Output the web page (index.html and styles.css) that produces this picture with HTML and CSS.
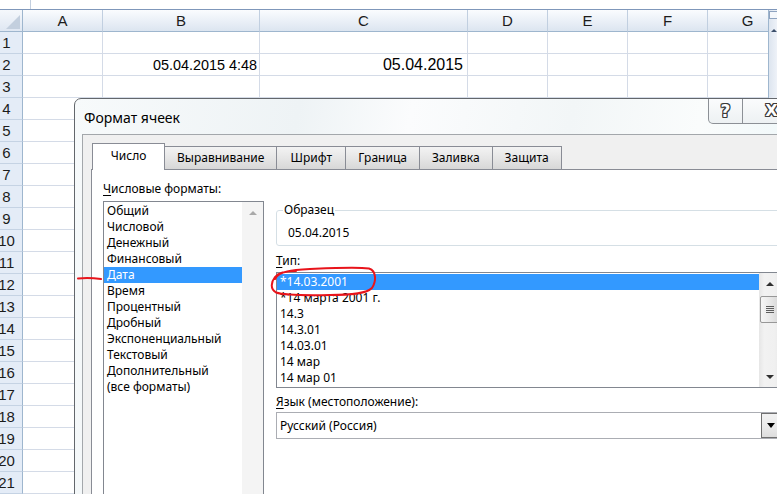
FILE: index.html
```html
<!DOCTYPE html>
<html lang="ru">
<head>
<meta charset="utf-8">
<title>Формат ячеек</title>
<link rel="stylesheet" href="styles.css">
</head>
<body>
<div class="sheet">
  <div class="topbar"><div class="namebox"></div><div class="formula"></div></div>
  <div class="sheetbody">
    <div class="grid">
      <div class="corner"></div><div class="ch">A</div><div class="ch">B</div><div class="ch">C</div><div class="ch">D</div><div class="ch">E</div><div class="ch">F</div><div class="ch">G</div>
      <div class="rh">1</div><div class="cell"></div><div class="cell"></div><div class="cell"></div><div class="cell"></div><div class="cell"></div><div class="cell"></div><div class="cell"></div>
      <div class="rh">2</div><div class="cell"></div><div class="cell">05.04.2015 4:48</div><div class="cell big">05.04.2015</div><div class="cell"></div><div class="cell"></div><div class="cell"></div><div class="cell"></div>
      <div class="rh">3</div><div class="cell"></div><div class="cell"></div><div class="cell"></div><div class="cell"></div><div class="cell"></div><div class="cell"></div><div class="cell"></div>
      <div class="rh">4</div><div class="cell"></div><div class="cell"></div><div class="cell"></div><div class="cell"></div><div class="cell"></div><div class="cell"></div><div class="cell"></div>
      <div class="rh">5</div><div class="cell"></div><div class="cell"></div><div class="cell"></div><div class="cell"></div><div class="cell"></div><div class="cell"></div><div class="cell"></div>
      <div class="rh">6</div><div class="cell"></div><div class="cell"></div><div class="cell"></div><div class="cell"></div><div class="cell"></div><div class="cell"></div><div class="cell"></div>
      <div class="rh">7</div><div class="cell"></div><div class="cell"></div><div class="cell"></div><div class="cell"></div><div class="cell"></div><div class="cell"></div><div class="cell"></div>
      <div class="rh">8</div><div class="cell"></div><div class="cell"></div><div class="cell"></div><div class="cell"></div><div class="cell"></div><div class="cell"></div><div class="cell"></div>
      <div class="rh">9</div><div class="cell"></div><div class="cell"></div><div class="cell"></div><div class="cell"></div><div class="cell"></div><div class="cell"></div><div class="cell"></div>
      <div class="rh">10</div><div class="cell"></div><div class="cell"></div><div class="cell"></div><div class="cell"></div><div class="cell"></div><div class="cell"></div><div class="cell"></div>
      <div class="rh">11</div><div class="cell"></div><div class="cell"></div><div class="cell"></div><div class="cell"></div><div class="cell"></div><div class="cell"></div><div class="cell"></div>
      <div class="rh">12</div><div class="cell"></div><div class="cell"></div><div class="cell"></div><div class="cell"></div><div class="cell"></div><div class="cell"></div><div class="cell"></div>
      <div class="rh">13</div><div class="cell"></div><div class="cell"></div><div class="cell"></div><div class="cell"></div><div class="cell"></div><div class="cell"></div><div class="cell"></div>
      <div class="rh">14</div><div class="cell"></div><div class="cell"></div><div class="cell"></div><div class="cell"></div><div class="cell"></div><div class="cell"></div><div class="cell"></div>
      <div class="rh">15</div><div class="cell"></div><div class="cell"></div><div class="cell"></div><div class="cell"></div><div class="cell"></div><div class="cell"></div><div class="cell"></div>
      <div class="rh">16</div><div class="cell"></div><div class="cell"></div><div class="cell"></div><div class="cell"></div><div class="cell"></div><div class="cell"></div><div class="cell"></div>
      <div class="rh">17</div><div class="cell"></div><div class="cell"></div><div class="cell"></div><div class="cell"></div><div class="cell"></div><div class="cell"></div><div class="cell"></div>
      <div class="rh">18</div><div class="cell"></div><div class="cell"></div><div class="cell"></div><div class="cell"></div><div class="cell"></div><div class="cell"></div><div class="cell"></div>
      <div class="rh">19</div><div class="cell"></div><div class="cell"></div><div class="cell"></div><div class="cell"></div><div class="cell"></div><div class="cell"></div><div class="cell"></div>
      <div class="rh">20</div><div class="cell"></div><div class="cell"></div><div class="cell"></div><div class="cell"></div><div class="cell"></div><div class="cell"></div><div class="cell"></div>
      <div class="rh">21</div><div class="cell"></div><div class="cell"></div><div class="cell"></div><div class="cell"></div><div class="cell"></div><div class="cell"></div><div class="cell"></div>
    </div>
    <div class="vscroll">
      <div class="splitbox"></div>
      <div class="vs-up"></div>
    </div>
  </div>
</div>

<div class="dialog">
  <div class="titlebar">
    <span class="title">Формат ячеек</span>
    <div class="capbtns">
      <div class="cap help">?</div>
      <div class="cap close">X</div>
    </div>
  </div>
  <div class="client">
    <div class="tabs">
      <div class="tab active">Число</div>
      <div class="tab">Выравнивание</div>
      <div class="tab">Шрифт</div>
      <div class="tab">Граница</div>
      <div class="tab">Заливка</div>
      <div class="tab">Защита</div>
    </div>
    <div class="panel">
      <div class="leftcol">
        <div class="label"><u>Ч</u>исловые форматы:</div>
        <div class="listbox cats">
          <div class="items">
            <div class="item">Общий</div>
            <div class="item">Числовой</div>
            <div class="item">Денежный</div>
            <div class="item">Финансовый</div>
            <div class="item selected">Дата</div>
            <div class="item">Время</div>
            <div class="item">Процентный</div>
            <div class="item">Дробный</div>
            <div class="item">Экспоненциальный</div>
            <div class="item">Текстовый</div>
            <div class="item">Дополнительный</div>
            <div class="item">(все форматы)</div>
          </div>
          <div class="sbar disabled">
            <div class="sbtn"><span class="arr-up"></span></div>
          </div>
        </div>
      </div>
      <div class="rightcol">
        <fieldset class="sample">
          <legend>Образец</legend>
          <div class="sample-value">05.04.2015</div>
        </fieldset>
        <div class="label type-label"><u>Т</u>ип:</div>
        <div class="listbox types">
          <div class="items">
            <div class="item selected">*14.03.2001</div>
            <div class="item">*14 марта 2001 г.</div>
            <div class="item">14.3</div>
            <div class="item">14.3.01</div>
            <div class="item">14.03.01</div>
            <div class="item">14 мар</div>
            <div class="item">14 мар 01</div>
          </div>
          <div class="sbar">
            <div class="sbtn"><span class="arr-up"></span></div>
            <div class="thumb"><span class="grip"></span></div>
            <div class="track"></div>
            <div class="sbtn"><span class="arr-down"></span></div>
          </div>
        </div>
        <div class="label lang-label"><u>Я</u>зык (местоположение):</div>
        <div class="combo">
          <span class="combo-text">Русский (Россия)</span>
          <div class="combo-btn"><span class="arr-down dark"></span></div>
        </div>
      </div>
    </div>
  </div>
</div>

<svg class="marks" width="777" height="494" viewBox="0 0 777 494">
  <path d="M78 278.5 C86 277.5 94 278 101 279" fill="none" stroke="#e8141b" stroke-width="2" stroke-linecap="round"/>
  <path d="M275 279 C279 271 292 270 310 269 C335 268 356 267 369 268.5 C377 271 376 282 372 288 C366 294 350 295 330 295 C305 295.5 285 295.5 276 292.5 C270 289 271 282 275 277 C279 272 288 271 296 271" fill="none" stroke="#e8141b" stroke-width="2" stroke-linecap="round" stroke-linejoin="round"/>
</svg>
</body>
</html>
```

FILE: styles.css
```css
* { box-sizing: border-box; }
html, body { margin: 0; padding: 0; }
body {
  width: 777px;
  height: 494px;
  overflow: hidden;
  position: relative;
  background: #fff;
  font-family: "Liberation Sans", Arial, sans-serif;
  color: #000;
}

/* ---------- spreadsheet ---------- */
.topbar {
  height: 10px;
  display: flex;
  border-bottom: 1px solid #7f97ba;
  background: #fff;
}
.namebox { width: 31px; border-right: 1px solid #c3cfdf; }
.formula { flex: 1; }

.sheetbody { display: flex; }
.grid {
  width: 768px;
  overflow: hidden;
  display: grid;
  grid-template-columns: 23px 80px 157px 208px 80px 80px 80px 80px;
  grid-auto-rows: 22px;
}
.corner {
  position: relative;
  background: linear-gradient(#f5f8fc, #dfe7f2);
  border-right: 1px solid #9eb6ce;
  border-bottom: 1px solid #9eb6ce;
}
.corner::after {
  content: "";
  position: absolute;
  right: 2px;
  bottom: 2px;
  width: 14px;
  height: 14px;
  background: #c3cfde;
  clip-path: polygon(100% 0, 100% 100%, 0 100%);
}
.ch {
  background: linear-gradient(#fafcfe, #e8eef6 60%, #dce5f0);
  border-right: 1px solid #c1cfe0;
  border-bottom: 1px solid #9eb6ce;
  display: flex;
  align-items: center;
  justify-content: center;
  font-size: 15px;
  color: #1c1c1c;
}
.rh {
  background: #e4ecf7;
  border-right: 1px solid #9eb6ce;
  border-bottom: 1px solid #c5d3e4;
  display: flex;
  align-items: center;
  justify-content: center;
  padding-right: 9px;
  font-size: 15px;
  color: #1c1c1c;
  white-space: nowrap;
}
.cell {
  border-right: 1px solid #d4dbe7;
  border-bottom: 1px solid #d4dbe7;
  display: flex;
  align-items: center;
  justify-content: flex-end;
  padding-right: 2px;
  font-size: 14.4px;
  white-space: nowrap;
  overflow: hidden;
}
.cell.big { font-size: 16px; padding-right: 4px; }

.vscroll {
  width: 9px;
  border-left: 1px solid #9eb6ce;
  background: linear-gradient(90deg, #dde5ef, #eef2f8);
}
.splitbox {
  height: 8px;
  margin-top: 1px;
  border: 1px solid #8ea3c0;
  border-right: none;
  background: #f4f7fb;
}
.vs-up {
  width: 0;
  height: 0;
  margin: 10px 0 0 2px;
  border-left: 3px solid transparent;
  border-right: 3px solid transparent;
  border-bottom: 3px solid #3c4f6b;
}

/* ---------- dialog ---------- */
.dialog {
  position: absolute;
  left: 74px;
  top: 98px;
  width: 734px;
  height: 420px;
  border: 1px solid #63676c;
  border-radius: 7px 7px 0 0;
  padding: 0 6px 0 7px;
  background: linear-gradient(100deg, #f7fafb 0%, #eef3f5 28%, #fbfcfd 42%, #f2f6f7 62%, #fafcfc 78%, #e8f5f8 100%);
  font-family: "Noto Sans", "Open Sans", sans-serif;
  font-size: 12px;
  color: #000;
  overflow: hidden;
}
.titlebar {
  height: 35px;
  display: flex;
  justify-content: space-between;
  align-items: flex-start;
}
.title {
  font-size: 14px;
  line-height: 20px;
  margin: 9px 0 0 2px;
}
.capbtns { display: flex; margin-top: -1px; }
.cap {
  height: 26px;
  border: 1px solid #8c9096;
  border-top: none;
  display: flex;
  align-items: center;
  justify-content: center;
  background: linear-gradient(#fbfcfd, #edf1f3);
  font-family: "DejaVu Sans", sans-serif;
  font-weight: bold;
  font-size: 17px;
  color: #fff;
  text-shadow: 1px 0 0 #3b3b3b, -1px 0 0 #3b3b3b, 0 1px 0 #3b3b3b, 0 -1px 0 #3b3b3b,
               1px 1px 0 #3b3b3b, -1px -1px 0 #3b3b3b, 1px -1px 0 #3b3b3b, -1px 1px 0 #3b3b3b;
}
.help { width: 35px; border-radius: 0 0 0 5px; }
.close { width: 58px; border-left: none; border-radius: 0 0 5px 0; font-size: 16px; }

.client {
  height: 400px;
  background: #f0f0f0;
  border-top: 1px solid #a3a7ab;
  border-left: 1px solid #a3a7ab;
  padding: 8px 0 0 8px;
}
.tabs {
  display: flex;
  align-items: flex-end;
  height: 26px;
  margin-left: 1px;
}
.tab {
  height: 23px;
  min-width: 70px;
  padding: 0 12px;
  margin-left: -1px;
  border: 1px solid #898c95;
  border-bottom: none;
  background: linear-gradient(#f3f3f3, #e6e6e6 50%, #d7d7d7);
  display: flex;
  align-items: center;
  justify-content: center;
  white-space: nowrap;
  line-height: 16px;
}
.tab.active {
  height: 27px;
  min-width: 73px;
  margin-left: 0;
  margin-bottom: -1px;
  background: #fff;
  position: relative;
  z-index: 1;
  padding-bottom: 2px;
}

.panel {
  height: 340px;
  background: #fff;
  border-top: 1px solid #898c95;
  border-left: 1px solid #898c95;
  display: flex;
  gap: 12px;
  padding: 11px 0 0 11px;
}
.label { line-height: 16px; white-space: nowrap; }
.label u { text-decoration-thickness: 1px; text-underline-offset: 2px; }

.leftcol { width: 161px; flex: none; }
.rightcol { width: 505px; flex: none; padding-top: 21px; }

.listbox {
  display: flex;
  border: 1px solid #828790;
  background: #fff;
}
.cats { margin-top: 4px; height: 320px; }
.items { flex: 1; padding-top: 1px; min-width: 0; }
.item {
  height: 16px;
  line-height: 16px;
  padding-left: 3px;
  white-space: nowrap;
  overflow: hidden;
}
.item.selected { background: #3399ff; color: #fff; }

.sbar {
  width: 21px;
  flex: none;
  display: flex;
  flex-direction: column;
  background: linear-gradient(90deg, #e6e6e6, #f2f2f2 25%, #f0f0f0 75%, #e9e9e9);
}
.sbar.disabled { background: #f4f4f4; }
.sbtn {
  height: 21px;
  flex: none;
  display: flex;
  align-items: center;
  justify-content: center;
}
.arr-up, .arr-down {
  width: 0;
  height: 0;
  border-left: 4px solid transparent;
  border-right: 4px solid transparent;
}
.arr-up { border-bottom: 4px solid #2f2f2f; }
.arr-down { border-top: 4px solid #2f2f2f; }
.disabled .arr-up { border-bottom-color: #a9a9a9; }
.thumb {
  height: 27px;
  margin: 2px 1px 0 1px;
  flex: none;
  border: 1px solid #979797;
  border-radius: 2px;
  background: linear-gradient(90deg, #f6f6f6, #e9e9e9 50%, #d9d9d9);
  display: flex;
  align-items: center;
  justify-content: center;
}
.grip {
  width: 8px;
  height: 7px;
  background: repeating-linear-gradient(#5d5d5d 0 1px, transparent 1px 2px);
}
.track { flex: 1; }

.sample {
  margin: 0;
  padding: 0 0 4px 6px;
  border: 1px solid #d5dfe5;
  border-radius: 3px;
  min-width: 0;
}
.sample legend {
  padding: 0 1px;
  line-height: 16px;
}
.sample-value {
  line-height: 16px;
  margin: 7px 0 0 5px;
}
.type-label { margin-top: 7px; }
.types { margin-top: 3px; height: 116px; }
.lang-label { margin-top: 6px; }
.combo {
  margin-top: 2px;
  height: 27px;
  border: 1px solid #abadb3;
  display: flex;
  align-items: center;
  background: #fff;
}
.combo-text { flex: 1; padding-left: 3px; line-height: 16px; }
.combo-btn {
  width: 19px;
  height: 25px;
  border: 1px solid #707070;
  background: linear-gradient(#f2f2f2, #ebebeb 50%, #dddddd);
  display: flex;
  align-items: center;
  justify-content: center;
}
.arr-down.dark { border-top-color: #000; border-left-width: 4px; border-right-width: 4px; border-top-width: 5px; }

/* ---------- red annotations ---------- */
.marks {
  position: absolute;
  left: 0;
  top: 0;
  pointer-events: none;
}
```
